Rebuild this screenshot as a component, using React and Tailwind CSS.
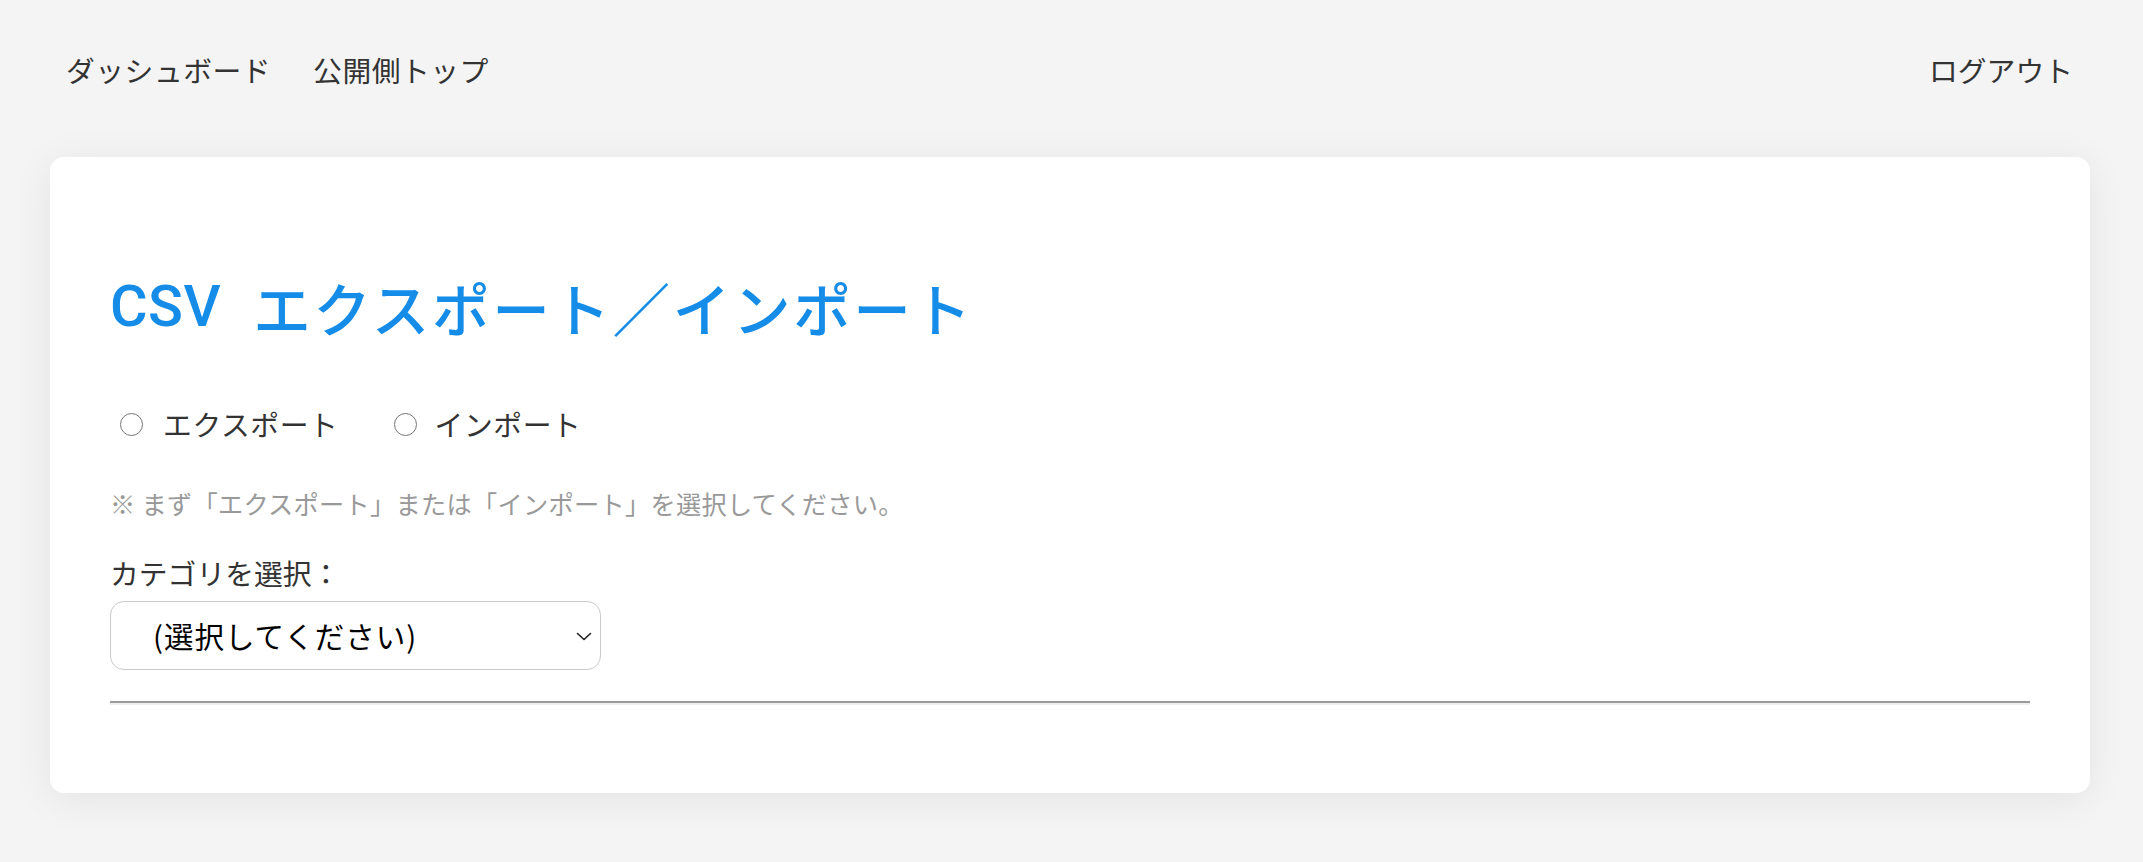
import React from "react";

const jp = { fontFamily: '"Noto Sans CJK JP", "Noto Sans", sans-serif' };
const title = { fontFamily: 'Roboto, "Liberation Sans", "Noto Sans CJK JP", sans-serif' };

export default function App() {
  return (
    <div className="min-h-screen bg-[#f4f4f4] text-[#333]" style={jp}>
      <nav className="flex items-center justify-between pt-[50px] pl-[66px] pr-[70px]">
        <div className="flex gap-[42px] text-[28.8px] leading-[40px]">
          <a className="tracking-[0.5px] text-[#333]">ダッシュボード</a>
          <a className="tracking-[0.5px] text-[#333]">公開側トップ</a>
        </div>
        <a className="text-[28.8px] leading-[40px] text-[#333]">ログアウト</a>
      </nav>

      <main className="mt-[67px] ml-[50px] mr-[53px] rounded-[14px] bg-white px-[60px] pt-[60px] pb-[88px] shadow-[0_6px_40px_rgba(0,0,0,0.07)]">
        <h1
          className="mt-[55px] flex h-[70px] items-center text-[57.6px] leading-[70px] font-medium text-[#148ce8]"
          style={title}
        >
          <span className="block tracking-[0.5px]">CSV</span>
          <span className="ml-[32px] block whitespace-nowrap tracking-[2.6px]" style={jp}>エクスポート／インポート</span>
        </h1>

        <div className="mt-[62px] flex items-center text-[28.8px] leading-[40px]">
          <label className="flex items-center">
            <input
              type="radio"
              name="mode"
              className="ml-[10px] h-[23px] w-[23px] appearance-none rounded-full border-[1.5px] border-[#767676] bg-white"
            />
            <span className="ml-[20px] tracking-[0.6px]">エクスポート</span>
          </label>
          <label className="ml-[55px] flex items-center">
            <input
              type="radio"
              name="mode"
              className="h-[23px] w-[23px] appearance-none rounded-full border-[1.5px] border-[#767676] bg-white"
            />
            <span className="ml-[18px] tracking-[0.6px]">インポート</span>
          </label>
        </div>

        <p className="mt-[41px] text-[25.2px] leading-[36px] tracking-[0.3px] text-[#999]">
          ※ まず「エクスポート」または「インポート」を選択してください。
        </p>

        <div className="mt-[32px] text-[28.8px] leading-[40px]">カテゴリを選択：</div>

        <div className="relative mt-[8px] w-[491px]">
          <select
            className="h-[69px] w-full appearance-none rounded-[14px] border-[1.8px] border-[#cacaca] bg-white pl-[42px] pr-[40px] text-[29.5px] tracking-[1px] text-black outline-none"
            style={jp}
            defaultValue=""
          >
            <option value="">(選択してください)</option>
          </select>
          <svg
            className="pointer-events-none absolute right-[9px] top-[31px]"
            width="16"
            height="9"
            viewBox="0 0 16 9"
            fill="none"
          >
            <path d="M1.5 1.5 L8 7.5 L14.5 1.5" stroke="#222" strokeWidth="1.6" strokeLinecap="round" strokeLinejoin="round" />
          </svg>
        </div>

        <hr className="mt-[31px] h-0 border-0 border-t-2 border-b-2 border-t-[#999] border-b-[#eee]" />
      </main>
    </div>
  );
}
